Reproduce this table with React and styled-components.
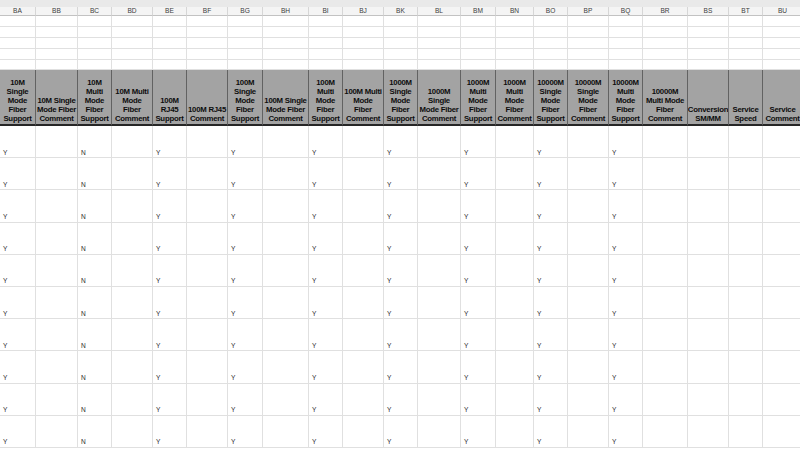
import React from "react";
import styled, { createGlobalStyle } from "styled-components";

const GlobalStyle = createGlobalStyle`
  html, body { margin: 0; padding: 0; background: #ffffff; overflow: hidden; }
  body { font-family: "Liberation Sans", Arial, sans-serif; }
`;

const COLS = [36, 42, 34, 41, 34, 41, 35, 46, 34, 41, 34, 43, 35, 38, 34, 41, 34, 45, 41, 34, 40];
const LETTERS = ["BA","BB","BC","BD","BE","BF","BG","BH","BI","BJ","BK","BL","BM","BN","BO","BP","BQ","BR","BS","BT","BU"];
const HEADERS = [
  ["10M", "Single", "Mode", "Fiber", "Support"],
  ["10M Single", "Mode Fiber", "Comment"],
  ["10M", "Multi", "Mode", "Fiber", "Support"],
  ["10M Multi", "Mode", "Fiber", "Comment"],
  ["100M", "RJ45", "Support"],
  ["100M RJ45", "Comment"],
  ["100M", "Single", "Mode", "Fiber", "Support"],
  ["100M Single", "Mode Fiber", "Comment"],
  ["100M", "Multi", "Mode", "Fiber", "Support"],
  ["100M Multi", "Mode", "Fiber", "Comment"],
  ["1000M", "Single", "Mode", "Fiber", "Support"],
  ["1000M", "Single", "Mode Fiber", "Comment"],
  ["1000M", "Multi", "Mode", "Fiber", "Support"],
  ["1000M", "Multi", "Mode", "Fiber", "Comment"],
  ["10000M", "Single", "Mode", "Fiber", "Support"],
  ["10000M", "Single", "Mode", "Fiber", "Comment"],
  ["10000M", "Multi", "Mode", "Fiber", "Support"],
  ["10000M", "Multi Mode", "Fiber", "Comment"],
  ["Conversion", "SM/MM"],
  ["Service", "Speed"],
  ["Service", "Comment"],
];
const VALUES = ["Y", "", "N", "", "Y", "", "Y", "", "Y", "", "Y", "", "Y", "", "Y", "", "Y", "", "", "", ""];

const template = COLS.map((w) => `${w}px`).join(" ");

const Sheet = styled.div`
  width: 800px;
  height: 452px;
  overflow: hidden;
  display: flex;
  flex-direction: column;
`;

const TopBand = styled.div`
  height: 7px;
  flex: none;
  background: #e9e9e9;
`;

const Row = styled.div`
  display: grid;
  grid-template-columns: ${template};
  flex: none;
  height: ${(p) => p.$h}px;
`;

const ColHead = styled.div`
  box-sizing: border-box;
  background: #f4f4f4;
  border-right: 1px solid #d6d6d6;
  border-bottom: 1px solid #c2c2c2;
  font-size: 6.6px;
  color: #3c3c3c;
  display: flex;
  align-items: center;
  justify-content: center;
  line-height: 1;
  padding-top: 1px;
`;

const BlankCell = styled.div`
  box-sizing: border-box;
  border-right: 1px solid #e0e0e0;
  border-bottom: 1px solid #e0e0e0;
  background: #ffffff;
`;

const HeadCell = styled.div`
  box-sizing: border-box;
  background: #a3a3a3;
  border-right: 1px solid #626262;
  border-bottom: 2px solid #262626;
  display: flex;
  flex-direction: column;
  justify-content: flex-end;
  align-items: center;
  padding: 0 0 1px;
  font-weight: bold;
  font-size: 7.8px;
  line-height: 9px;
  color: #0d0d0d;
  letter-spacing: -0.25px;
  overflow: hidden;
`;

const HeadLine = styled.span`
  white-space: nowrap;
`;

const DataCell = styled.div`
  box-sizing: border-box;
  border-right: 1px solid #e0e0e0;
  border-bottom: 1px solid #e0e0e0;
  display: flex;
  align-items: flex-end;
  padding: 0 0 1px 3px;
  font-size: 6.6px;
  line-height: 1;
  color: #2a2a2a;
`;

const BLANK_HEIGHTS = [11, 11, 11, 11, 10];
const DATA_ROWS = 10;

export default function App() {
  return (
    <>
      <GlobalStyle />
      <Sheet>
        <TopBand />
        <Row $h={9}>
          {LETTERS.map((l) => (
            <ColHead key={l}>{l}</ColHead>
          ))}
        </Row>
        {BLANK_HEIGHTS.map((h, r) => (
          <Row key={`b${r}`} $h={h}>
            {COLS.map((_, c) => (
              <BlankCell key={c} />
            ))}
          </Row>
        ))}
        <Row $h={56}>
          {HEADERS.map((lines, c) => (
            <HeadCell key={c}>
              {lines.map((l, i) => (
                <HeadLine key={i}>{l}</HeadLine>
              ))}
            </HeadCell>
          ))}
        </Row>
        {Array.from({ length: DATA_ROWS }).map((_, r) => (
          <Row key={`d${r}`} $h={32.2}>
            {VALUES.map((v, c) => (
              <DataCell key={c}>{v}</DataCell>
            ))}
          </Row>
        ))}
      </Sheet>
    </>
  );
}
